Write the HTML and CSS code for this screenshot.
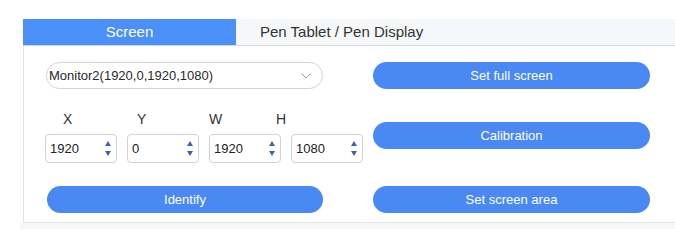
FILE: index.html
```html
<!DOCTYPE html>
<html>
<head>
<meta charset="utf-8">
<link rel="stylesheet" href="styles.css">
</head>
<body>
<div class="app">
  <div class="tabs">
    <div class="tab active">Screen</div>
    <div class="tab">Pen Tablet / Pen Display</div>
  </div>
  <div class="panel">
    <div class="col left">
      <div class="select">
        <span>Monitor2(1920,0,1920,1080)</span>
        <svg class="chev" width="10" height="6" viewBox="0 0 10 6"><path d="M0.5 0.5 L5 5 L9.5 0.5" fill="none" stroke="#9a9a9a" stroke-width="1"/></svg>
      </div>
      <div class="labels">
        <span class="lx">X</span><span class="ly">Y</span><span class="lw">W</span><span class="lh">H</span>
      </div>
      <div class="inputs">
        <div class="num"><span>1920</span><span class="spin"><i class="up"></i><i class="down"></i></span></div>
        <div class="num"><span>0</span><span class="spin"><i class="up"></i><i class="down"></i></span></div>
        <div class="num"><span>1920</span><span class="spin"><i class="up"></i><i class="down"></i></span></div>
        <div class="num"><span>1080</span><span class="spin"><i class="up"></i><i class="down"></i></span></div>
      </div>
      <div class="btn identify">Identify</div>
    </div>
    <div class="col right">
      <div class="btn">Set full screen</div>
      <div class="btn calib">Calibration</div>
      <div class="btn area">Set screen area</div>
    </div>
  </div>
  <div class="strip"></div>
</div>
</body>
</html>
```

FILE: styles.css
```css
html, body {
  margin: 0;
  padding: 0;
  background: #ffffff;
  font-family: "Liberation Sans", Arial, sans-serif;
}
.app {
  padding: 19px 0 0 23px;
}
.tabs {
  display: flex;
  height: 26px;
  background: #f6f7f9;
  border-bottom: 1px solid #d6d7d9;
}
.tab {
  font-size: 15px;
  line-height: 26px;
  color: #333333;
  padding-left: 24px;
}
.tab.active {
  width: 213px;
  padding-left: 0;
  background: #4a90f8;
  color: #ffffff;
  text-align: center;
}
.panel {
  display: flex;
  gap: 50px;
  height: 177px;
  padding: 16px 0 0 22px;
  box-sizing: border-box;
  border-left: 1px solid #e2e2e2;
  border-bottom: 1px solid #e6e6e6;
}
.strip {
  height: 6px;
  margin-left: -3px;
  background: #f6f6f7;
}
.col {
  display: flex;
  flex-direction: column;
  width: 277px;
  flex-shrink: 0;
}
.select {
  height: 27px;
  box-sizing: border-box;
  border: 1px solid #d4d4d4;
  border-radius: 14px;
  display: flex;
  align-items: center;
  justify-content: space-between;
  padding: 0 11px 0 2px;
  font-size: 13px;
  color: #2a2a2a;
}
.labels {
  position: relative;
  height: 16px;
  margin-top: 22px;
  font-size: 14px;
  color: #333333;
  line-height: 16px;
}
.labels span {
  position: absolute;
  top: 0;
}
.lx { left: 17px; }
.ly { left: 91px; }
.lw { left: 163px; }
.lh { left: 230px; }
.inputs {
  display: flex;
  gap: 10px;
  margin-top: 7px;
  margin-left: -1px;
  width: 318px;
}
.num {
  flex: 0 0 72px;
  height: 29px;
  box-sizing: border-box;
  border: 1px solid #d2d2d2;
  border-radius: 4px;
  display: flex;
  align-items: center;
  justify-content: space-between;
  padding: 0 5px 0 4px;
  font-size: 13px;
  color: #222222;
}
.spin {
  display: flex;
  flex-direction: column;
  gap: 5px;
  align-items: center;
}
.spin i {
  display: block;
  width: 0;
  height: 0;
  border-left: 3.5px solid transparent;
  border-right: 3.5px solid transparent;
}
.spin .up { border-bottom: 5px solid #3f62a8; }
.spin .down { border-top: 5px solid #3f62a8; }
.btn {
  height: 27px;
  border-radius: 14px;
  background: #4a88f4;
  color: #ffffff;
  font-size: 13px;
  line-height: 27px;
  text-align: center;
}
.identify {
  margin-top: 23px;
  margin-left: 1px;
  width: 276px;
}
.right .calib { margin-top: 33px; }
.right .area { margin-top: 37px; }
```
